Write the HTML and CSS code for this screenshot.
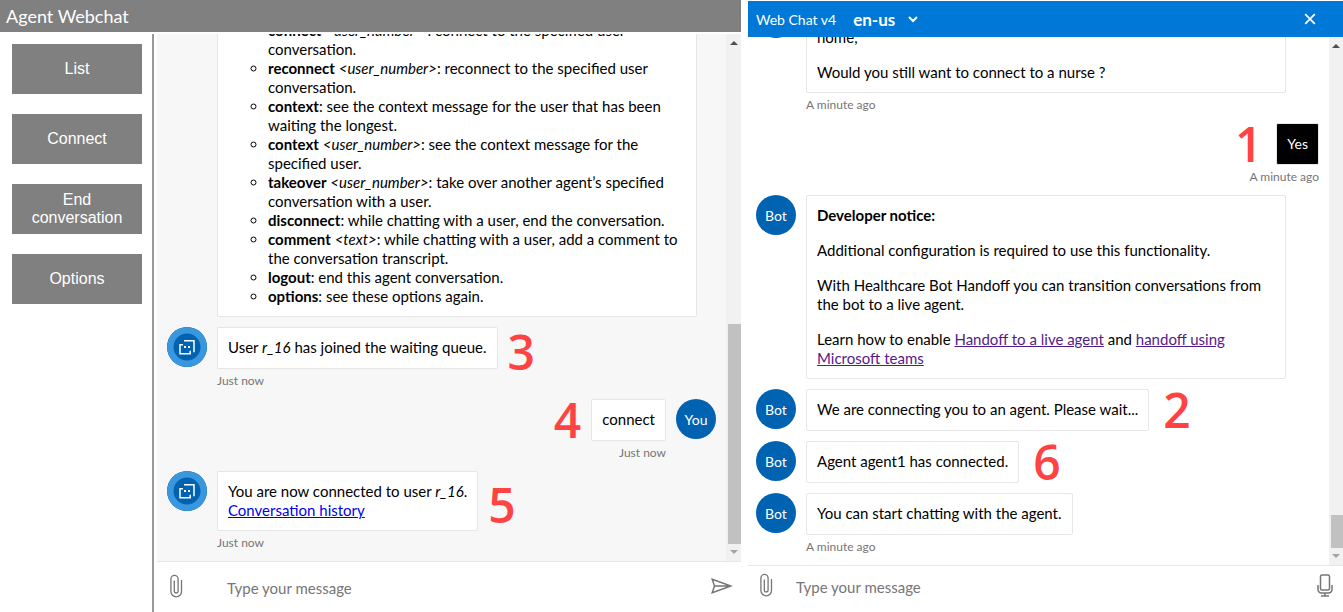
FILE: index.html
```html
<!DOCTYPE html>
<html lang="en-us">
<head>
<meta charset="utf-8">
<title>Agent Webchat</title>
<link rel="stylesheet" href="styles.css">
</head>
<body>
<svg class="sprite" aria-hidden="true">
  <symbol id="clip" viewBox="0 0 14 24">
    <path d="M12.500 6v11.500a5.300 5.300 0 0 1-10.600 0V5a3.600 3.600 0 0 1 7.200 0v12a1.900 1.900 0 0 1-3.800 0V6.500" fill="none" stroke="#767676" stroke-width="1.300"/>
  </symbol>
  <symbol id="agent" viewBox="0 0 40 40">
    <circle cx="20" cy="20" r="20" fill="#3a96dd"/>
    <circle cx="20" cy="20" r="13.500" fill="#0063b1"/>
    <path d="M17 13.700h10v11.500M16 17.700h-3v9.100h10.200v-3" fill="none" stroke="#fff" stroke-width="1.500"/>
    <path d="M17 19h2v2h-2zM21 19h2v2h-2z" fill="#fff"/>
  </symbol>
</svg>
<div class="page">
  <section class="agent">
    <header class="agent-header"><h1>Agent Webchat</h1></header>
    <div class="agent-body">
      <nav class="commands">
        <button type="button">List</button>
        <button type="button">Connect</button>
        <button type="button">End conversation</button>
        <button type="button">Options</button>
      </nav>
      <div class="chat agent-chat">
        <div class="history">
          <div class="messages">
            <div class="message">
              <div class="avatar-space"></div>
              <div class="bubble wide">
                <ul>
                  <li><b>connect</b> <i>&lt;user_number&gt;</i> : connect to the specified user conversation.</li>
                  <li><b>reconnect</b> <i>&lt;user_number&gt;</i>: reconnect to the specified user conversation.</li>
                  <li><b>context</b>: see the context message for the user that has been waiting the longest.</li>
                  <li><b>context</b> <i>&lt;user_number&gt;</i>: see the context message for the specified user.</li>
                  <li><b>takeover</b> <i>&lt;user_number&gt;</i>: take over another agent’s specified conversation with a user.</li>
                  <li><b>disconnect</b>: while chatting with a user, end the conversation.</li>
                  <li><b>comment</b> <i>&lt;text&gt;</i>: while chatting with a user, add a comment to the conversation transcript.</li>
                  <li><b>logout</b>: end this agent conversation.</li>
                  <li><b>options</b>: see these options again.</li>
                </ul>
              </div>
            </div>
            <div class="message">
              <svg class="avatar"><use href="#agent"/></svg>
              <div class="bubble"><p>User <i>r_16</i> has joined the waiting queue.</p><span class="step after low">3</span></div>
            </div>
            <time>Just now</time>
            <div class="message mine">
              <div class="bubble"><p>connect</p><span class="step before">4</span></div>
              <div class="avatar">You</div>
            </div>
            <time class="mine-time beside-avatar">Just now</time>
            <div class="message">
              <svg class="avatar"><use href="#agent"/></svg>
              <div class="bubble"><p>You are now connected to user <i>r_16</i>.<br><a href="#history">Conversation history</a></p><span class="step after low">5</span></div>
            </div>
            <time>Just now</time>
          </div>
          <div class="scrollbar" aria-hidden="true"><i class="up"></i><i class="thumb"></i><i class="down"></i></div>
        </div>
        <form class="composer">
          <button type="button" aria-label="Attach a file"><svg width="14" height="24"><use href="#clip"/></svg></button>
          <input type="text" placeholder="Type your message" aria-label="Type your message">
          <button type="button" aria-label="Send">
            <svg width="22" height="16" viewBox="0 0 22 16" fill="none" stroke="#767676" stroke-width="1.500"><path d="M1.200 1.300 20 8 1.200 14.700 3.500 8zM3.500 8H20"/></svg>
          </button>
        </form>
      </div>
    </div>
  </section>

  <section class="chat user-chat">
    <header class="user-header">
      <h2>Web Chat v4</h2>
      <label class="locale">
        <select aria-label="Language"><option>en-us</option></select>
        <svg width="10" height="7" viewBox="0 0 10 7" fill="none" stroke="#fff" stroke-width="2"><path d="M1 1l4 4 4-4"/></svg>
      </label>
      <button type="button" class="close" aria-label="Close">
        <svg width="12" height="12" viewBox="0 0 12 12" fill="none" stroke="#fff" stroke-width="1.800"><path d="M1.200 1.200l9.600 9.600M10.800 1.200l-9.600 9.600"/></svg>
      </button>
    </header>
    <div class="history">
      <div class="messages">
        <div class="message">
          <div class="avatar">Bot</div>
          <div class="bubble wide"><p><br>home,</p><p>Would you still want to connect to a nurse ?</p></div>
        </div>
        <time>A minute ago</time>
        <div class="message mine">
          <div class="bubble dark"><p>Yes</p><span class="step before far">1</span></div>
        </div>
        <time class="mine-time">A minute ago</time>
        <div class="message">
          <div class="avatar">Bot</div>
          <div class="bubble wide">
            <p><b>Developer notice:</b></p>
            <p>Additional configuration is required to use this functionality.</p>
            <p>With Healthcare Bot Handoff you can transition conversations from the bot to a live agent.</p>
            <p>Learn how to enable <a class="visited" href="#handoff">Handoff to a live agent</a> and <a class="visited" href="#teams">handoff using Microsoft teams</a></p>
          </div>
        </div>
        <div class="message">
          <div class="avatar">Bot</div>
          <div class="bubble"><p>We are connecting you to an agent. Please wait...</p><span class="step after far">2</span></div>
        </div>
        <div class="message">
          <div class="avatar">Bot</div>
          <div class="bubble"><p>Agent agent1 has connected.</p><span class="step after far">6</span></div>
        </div>
        <div class="message">
          <div class="avatar">Bot</div>
          <div class="bubble"><p>You can start chatting with the agent.</p></div>
        </div>
        <time>A minute ago</time>
      </div>
      <div class="scrollbar" aria-hidden="true"><i class="up"></i><i class="thumb"></i><i class="down"></i></div>
    </div>
    <form class="composer">
      <button type="button" aria-label="Attach a file"><svg width="14" height="24"><use href="#clip"/></svg></button>
      <input type="text" placeholder="Type your message" aria-label="Type your message">
      <button type="button" aria-label="Speak">
        <svg width="16" height="23" viewBox="0 0 16 23" fill="none" stroke="#767676" stroke-width="1.500"><rect x="3.500" y="1" width="9" height="15" rx="1.500"/><path d="M1 11v4.500a3.500 3.500 0 0 0 3.500 3.500h7a3.500 3.500 0 0 0 3.500-3.500V11M8 19v3M4 22h8"/></svg>
      </button>
    </form>
  </section>
</div>
</body>
</html>
```

FILE: styles.css
```css
* { box-sizing: border-box; }

body {
  margin: 0;
  background: #fff;
  color: #000;
  font: 15px/19px Lato, sans-serif;
}

h1, h2, p, ul { margin: 0; }

button, input, select {
  border: 0;
  font: inherit;
}

.sprite { position: absolute; width: 0; height: 0; }

.page {
  display: flex;
  gap: 7px;
  height: 100vh;
}

.agent {
  flex: 741 1 0;
  min-width: 0;
  display: flex;
  flex-direction: column;
  gap: 2px;
}

.agent-header {
  padding: 4px 6px;
  background: #808080;
  color: #fff;
}

.agent-header h1 { font-size: 18px; line-height: 24px; font-weight: 400; }

.agent-body { flex: 1; min-height: 0; display: flex; gap: 3px; }

.commands {
  flex: none;
  width: 154px;
  display: flex;
  flex-direction: column;
  gap: 20px;
  padding: 10px 10px 0 12px;
  border-right: 2px solid #999;
}

.commands button {
  height: 50px;
  padding: 0 16px;
  background: #808080;
  color: #fff;
  font: 16px/18px "Liberation Sans", Arial, sans-serif;
}

.chat { min-width: 0; display: flex; flex-direction: column; }
.agent-chat { flex: 1; }
.user-chat { flex: 595 1 0; padding-top: 1px; }

.user-header {
  flex: none;
  display: flex;
  align-items: center;
  height: 36px;
  padding: 0 27px 0 8px;
  background: #0078d7;
  color: #fff;
}

.user-header h2 { font-size: 14px; font-weight: 400; }

.locale { display: flex; align-items: center; gap: 12px; margin-left: 17px; }

.locale select {
  appearance: none;
  padding: 0;
  background: transparent;
  color: #fff;
  font-size: 17px;
  font-weight: 700;
}

.close { display: flex; margin-left: auto; padding: 0; background: transparent; }

.history { flex: 1; min-height: 0; display: flex; overflow: hidden; }
.agent-chat .history { background: #f7f7f7; }

.messages {
  flex: 1;
  min-width: 0;
  display: flex;
  flex-direction: column;
  justify-content: flex-end;
  gap: 10px;
  padding: 0 10px 10px;
}

.user-chat .messages { padding-left: 8px; }

.message { flex: none; display: flex; align-items: flex-start; gap: 10px; }
.mine { justify-content: flex-end; }

.avatar, .avatar-space { flex: none; width: 40px; height: 40px; }

.avatar {
  border-radius: 50%;
  background: #0063b1;
  color: #fff;
  font-size: 14px;
  line-height: 41px;
  text-align: center;
}

.bubble {
  position: relative;
  max-width: 480px;
  min-height: 42px;
  padding: 10px;
  border: 1px solid #e6e6e6;
  border-radius: 2px;
  background: #fff;
}

.wide { flex: 0 1 480px; }
.dark { background: #000; color: #fff; font-size: 14px; }
.bubble p + p { margin-top: 16px; }
.bubble ul { padding-left: 40px; list-style: circle; }

a { color: #0000ee; }
.visited { color: #551a8b; }

time {
  flex: none;
  margin: -10px 0 0 50px;
  padding-top: 4px;
  color: #767676;
  font-size: 12px;
  line-height: 16px;
}

.mine-time { text-align: right; }
.beside-avatar { margin-right: 50px; }

/* Numbered walkthrough markers laid over the conversation */
.step {
  position: absolute;
  top: 50%;
  margin: 0 11px;
  transform: translateY(-50%);
  color: #ff4343;
  font: 600 48px/48px "Open Sans", sans-serif;
}

.after { left: 100%; }
.before { right: 100%; }
.far { margin: 0 15px; }
.low { padding-top: 8px; }

.scrollbar {
  flex: none;
  width: 15px;
  display: flex;
  flex-direction: column;
  align-items: center;
  padding: 7px 0;
  background: #f1f1f1;
}

.user-chat .scrollbar { width: 14px; }

.up, .down { border: 4px solid transparent; border-top: 0; border-bottom: 4px solid #505050; }
.down { border-bottom: 0; border-top: 4px solid #a3a3a3; margin-top: 6px; }

.thumb {
  align-self: flex-end;
  width: 13px;
  height: 220px;
  margin-top: auto;
  background: #c1c1c1;
}

.user-chat .thumb { width: 12px; height: 33px; }

.composer {
  flex: none;
  display: flex;
  align-items: center;
  height: 51px;
  padding-bottom: 2px;
  border-top: 1px solid #e6e6e6;
}

.user-chat .composer { height: 47px; padding-bottom: 8px; }

.composer button {
  flex: none;
  width: 38px;
  display: flex;
  justify-content: center;
  padding: 0;
  background: transparent;
}

.composer input {
  flex: 1;
  min-width: 0;
  padding: 4px 0 0 32px;
  outline: 0;
  background: transparent;
  color: #000;
}

.composer input::placeholder { color: #767676; opacity: 1; }
.user-chat .composer button { width: 36px; }
.user-chat .composer input { padding-left: 12px; }
```
